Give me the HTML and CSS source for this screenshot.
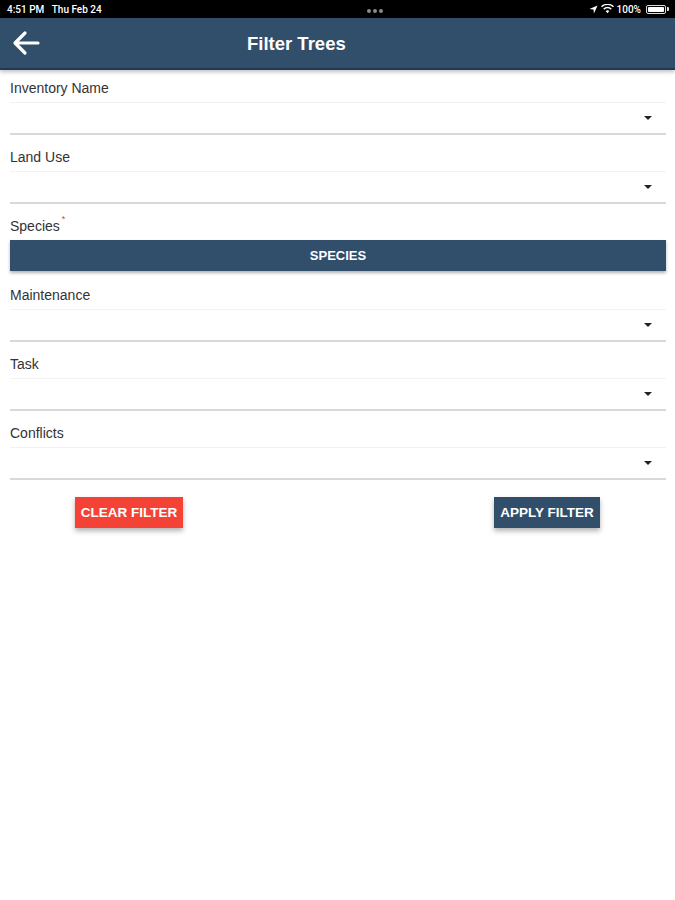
FILE: index.html
```html
<!DOCTYPE html>
<html>
<head>
<meta charset="utf-8">
<link rel="stylesheet" href="styles.css">
</head>
<body>
<div class="status">
  <div class="status-left">4:51 PM&nbsp;&nbsp;&nbsp;Thu Feb 24</div>
  <div class="status-dots"><span></span><span></span><span></span></div>
  <div class="status-right">
    <svg class="loc" width="9" height="9" viewBox="0 0 10 10"><path d="M9.5 0.5 L0.5 4.5 L5 5 L5.5 9.5 Z" fill="#fff"/></svg>
    <svg class="wifi" width="13" height="10" viewBox="0 0 14 10"><path d="M7 9.5 L9 7.2 A3 3 0 0 0 5 7.2 Z M3.6 5.8 A5 5 0 0 1 10.4 5.8 L11.6 4.5 A6.8 6.8 0 0 0 2.4 4.5 Z M1 3.1 A8.8 8.8 0 0 1 13 3.1 L14 2 A10.4 10.4 0 0 0 0 2 Z" fill="#fff"/></svg>
    <span>100%</span>
    <span class="battery"><span class="battery-fill"></span></span><span class="battery-tip"></span>
  </div>
</div>
<header class="appbar">
  <svg class="back" width="30" height="26" viewBox="0 0 30 26"><path d="M27 13 H5 M14 3 L4 13 L14 23" stroke="#fff" stroke-width="3.2" fill="none" stroke-linecap="round" stroke-linejoin="round"/></svg>
  <h1 class="title">Filter Trees</h1>
</header>
<main class="form">
  <div class="field">
    <div class="label">Inventory Name</div>
    <div class="select"><span class="caret"></span></div>
  </div>
  <div class="field">
    <div class="label">Land Use</div>
    <div class="select"><span class="caret"></span></div>
  </div>
  <div class="field">
    <div class="label">Species<span class="req">*</span></div>
    <button class="species-btn">SPECIES</button>
  </div>
  <div class="field">
    <div class="label">Maintenance</div>
    <div class="select"><span class="caret"></span></div>
  </div>
  <div class="field">
    <div class="label">Task</div>
    <div class="select"><span class="caret"></span></div>
  </div>
  <div class="field">
    <div class="label">Conflicts</div>
    <div class="select"><span class="caret"></span></div>
  </div>
  <div class="actions">
    <button class="btn btn-clear">CLEAR FILTER</button>
    <button class="btn btn-apply">APPLY FILTER</button>
  </div>
</main>
</body>
</html>
```
FILE: styles.css
```css
* { box-sizing: border-box; }
html, body { margin: 0; padding: 0; background: #fff; }
body { font-family: "Liberation Sans", Arial, sans-serif; width: 675px; height: 900px; overflow: hidden; }

.status {
  height: 18px;
  background: #000;
  color: #fff;
  display: flex;
  align-items: center;
  justify-content: space-between;
  padding: 0 6px 0 7px;
  font-family: Roboto, "Liberation Sans", sans-serif;
  font-size: 10px;
  font-weight: 500;
}
.status-dots { display: flex; gap: 2px; margin-left: 60px; margin-top: 4px; }
.status-dots span { width: 4px; height: 4px; border-radius: 50%; background: #8a8a8a; }
.status-right { display: flex; align-items: center; gap: 3px; }
.battery { width: 20px; height: 9px; border: 1px solid #ddd; border-radius: 2px; padding: 1px; display: inline-flex; margin-left: 2px; }
.battery-fill { flex: 1; background: #fff; border-radius: 1px; }
.battery-tip { width: 2px; height: 4px; background: #ddd; margin-left: -2px; border-radius: 0 1px 1px 0; }

.appbar {
  height: 52px;
  background: #314e6b;
  border-bottom: 2px solid #1f3a57;
  display: flex;
  align-items: center;
  padding-left: 11px;
  box-shadow: 0 2px 4px rgba(0,0,0,0.25);
  position: relative;
}
.back { display: block; }
.title {
  margin: 2px 0 0 206px;
  color: #fff;
  font-size: 18.5px;
  font-weight: 700;
}

.form { padding: 8px 9px 0 10px; }
.field { height: 69px; display: flex; flex-direction: column; }
.label {
  height: 24px;
  font-size: 14px;
  color: #333;
  padding-top: 2px;
}
.req { color: #e53935; font-size: 9px; vertical-align: top; margin-left: 2px; position: relative; top: -4px; }
.select {
  height: 33px;
  border-top: 1px solid #f2f2f2;
  border-bottom: 2px solid #d9d9d9;
  display: flex;
  align-items: center;
  justify-content: flex-end;
  padding-right: 14px;
}
.caret {
  width: 0; height: 0;
  border-left: 4px solid transparent;
  border-right: 4px solid transparent;
  border-top: 4px solid #222;
}
.species-btn {
  height: 31px;
  width: 100%;
  background: #314e6b;
  color: #fff;
  border: none;
  font-family: "Liberation Sans", Arial, sans-serif;
  font-weight: 700;
  font-size: 13px;
  box-shadow: 0 2px 3px rgba(0,0,0,0.3);
  padding: 0;
}
.actions {
  display: flex;
  justify-content: space-between;
  padding: 5px 66px 0 65px;
}
.btn {
  height: 31px;
  border: none;
  color: #fff;
  font-family: "Liberation Sans", Arial, sans-serif;
  font-weight: 700;
  font-size: 13.5px;
  padding: 0;
  box-shadow: 0 3px 5px rgba(0,0,0,0.3);
}
.btn-clear { background: #f44336; width: 108px; }
.btn-apply { background: #314e6b; width: 106px; }
```
